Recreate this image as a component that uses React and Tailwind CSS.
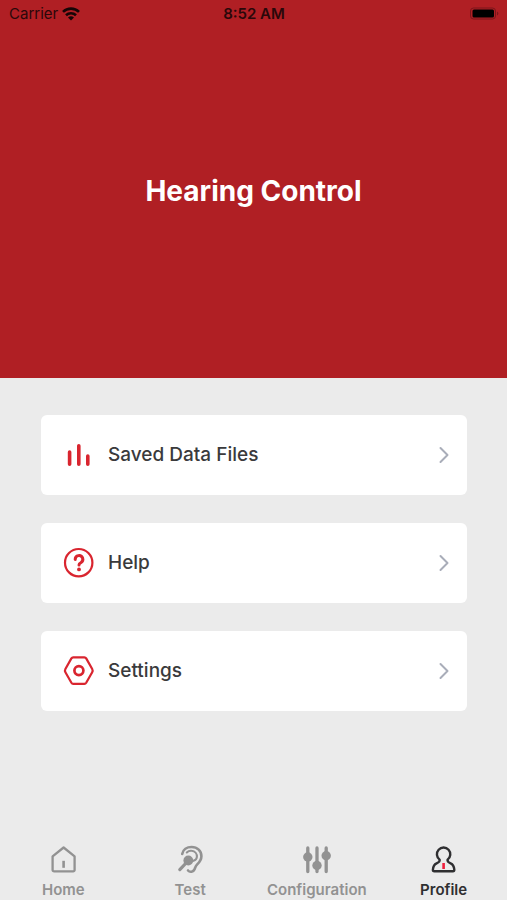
import React, { useState } from "react";
import clsx from "clsx";

const ChartIcon = () => (
  <svg viewBox="0 0 32 32" className="size-8" fill="none" stroke="#d9252f" strokeWidth="3.6" strokeLinecap="round">
    <path d="M6.600 13v12.200M15.800 6.800v18.400M24.800 17v8.200" />
  </svg>
);

const HelpIcon = () => (
  <svg viewBox="0 0 32 32" className="size-8" fill="none" stroke="#d9252f" strokeLinecap="round">
    <circle cx="15.700" cy="15.700" r="13.700" strokeWidth="2.200" />
    <path d="M12.200 12.400a3.800 3.800 0 1 1 5.600 3.300c-1.300.7-1.800 1.200-1.800 2.300" strokeWidth="3" />
    <circle cx="16" cy="22.400" r="1.900" fill="#d9252f" stroke="none" />
  </svg>
);

const SettingsIcon = () => (
  <svg viewBox="0 0 32 32" className="size-8" fill="none" stroke="#d9252f" strokeWidth="2.200" strokeLinejoin="round">
    <path d="M10.200 2.400h11.200q1.200 0 1.800 1l6 10.600q.9 1.600 0 3.200l-6 10.600q-.6 1-1.800 1H10.200q-1.200 0-1.800-1l-6-10.600q-.9-1.600 0-3.200l6-10.600q.6-1 1.800-1z" />
    <circle cx="15.900" cy="15.600" r="4.500" strokeWidth="2.700" />
  </svg>
);

const HomeIcon = () => (
  <svg viewBox="0 0 30 30" className="size-[30px]" fill="none" stroke="currentColor" strokeWidth="2.300" strokeLinejoin="round" strokeLinecap="round">
    <path d="M4.600 11.300 15.600 2.500l11 8.800v13.600a1.500 1.500 0 0 1-1.500 1.500H6.100a1.500 1.500 0 0 1-1.500-1.500z" />
    <path d="M15.600 15.800v7" strokeWidth="2.600" strokeLinecap="butt" />
  </svg>
);

const EarIcon = () => (
  <svg viewBox="0 0 30 30" className="size-[30px]" fill="none" stroke="currentColor" strokeLinecap="round">
    <path d="M7.200 9C8 4.600 11.900 2 16.600 2c5.800 0 9.800 3.900 9.800 9.200 0 3.900-2 6-4.200 8.200-1.700 1.700-1.900 3.200-2.700 5-1.100 2.500-4.600 3.300-6.500 1.100" strokeWidth="2.600" />
    <path d="M11.800 7.500c1.300-1.300 3-1.900 4.800-1.700 3.500.3 5.500 3 5.300 6.200-.2 2.200-1.500 3.200-3.400 3.800" strokeWidth="2.100" />
    <circle cx="13.300" cy="15.500" r="4.900" fill="currentColor" stroke="none" />
    <path d="M13 16 4.800 24.600" strokeWidth="3.200" />
  </svg>
);

const SlidersIcon = () => (
  <svg viewBox="0 0 30 30" className="size-[30px]" fill="currentColor" stroke="currentColor" strokeWidth="3.300" strokeLinecap="round">
    <path d="M5.800 3v23.500M15 3v23.500M24.200 3v23.500" />
    <g stroke="none">
      <circle cx="5.800" cy="12" r="4.700" />
      <circle cx="15" cy="20.500" r="4.700" />
      <circle cx="24.200" cy="10.800" r="4.700" />
    </g>
  </svg>
);

const ProfileIcon = () => (
  <svg viewBox="0 0 30 30" className="size-[30px]" fill="none" stroke="currentColor" strokeWidth="2.400" strokeLinejoin="round">
    <path d="M10.600 14.600A6.700 6.700 0 1 1 18.600 14.600C18.100 16.600 19.400 17.400 21.600 18.300c2.900 1.200 3.500 3.400 3.700 6.400q.1 1.600-1.400 1.600H5.300q-1.500 0-1.400-1.600c.2-3 .8-5.200 3.700-6.400 2.200-.9 3.500-1.700 3-3.700z" />
    <path d="M14.600 18v6" stroke="#f01f3d" strokeWidth="2.600" />
  </svg>
);

const menuItems = [
  { label: "Saved Data Files", Icon: ChartIcon },
  { label: "Help", Icon: HelpIcon },
  { label: "Settings", Icon: SettingsIcon },
];

const tabs = [
  { label: "Home", Icon: HomeIcon },
  { label: "Test", Icon: EarIcon },
  { label: "Configuration", Icon: SlidersIcon },
  { label: "Profile", Icon: ProfileIcon },
];

function StatusBar() {
  return (
    <div className="grid grid-cols-3 items-center h-7 pl-[9px] pr-2 text-[15px] leading-5 text-[#2a080a]">
      <div className="flex items-center gap-1">
        <span>Carrier</span>
        {/* wifi */}
        <svg viewBox="0 0 18 14" className="w-[18px] h-[14px]" fill="none" stroke="#160506" strokeWidth="2.600">
          <path d="M1 4.900a11.500 11.500 0 0 1 16 0M4 8.300a7.200 7.200 0 0 1 10 0" />
          <path d="M9 13.600 6 10.600a4.300 4.300 0 0 1 6 0z" fill="#160506" stroke="none" />
        </svg>
      </div>
      <span className="text-center font-semibold">8:52 AM</span>
      {/* battery */}
      <svg viewBox="0 0 30 14" className="w-[30px] h-[14px] justify-self-end">
        <rect x="1.500" y="1" width="25" height="11" rx="3" fill="none" stroke="#7a161b" />
        <rect x="3.500" y="2.500" width="21.500" height="8" rx="1.500" fill="#000" />
        <path d="M28 4.500v4q1.300-.6 1.300-2t-1.300-2z" fill="#7a161b" />
      </svg>
    </div>
  );
}

function App() {
  const [active, setActive] = useState("Profile");

  return (
    <div className="flex flex-col min-h-screen bg-[#ebebeb] font-['Inter','Liberation_Sans',sans-serif]">
      <header className="bg-[#b01f24] text-white">
        <StatusBar />
        <h1 className="pt-[145px] pb-[169px] text-center text-[28px] leading-9 font-bold">Hearing Control</h1>
      </header>

      <main className="flex flex-col gap-7 pl-[41px] pr-10 pt-[37px] pb-8">
        {menuItems.map(({ label, Icon }) => (
          <button
            key={label}
            className="flex items-center w-full h-20 pl-[22px] pr-4 rounded-md bg-white text-left cursor-pointer"
          >
            <Icon />
            <span className="ml-[13px] flex-1 text-[19px] leading-6 font-medium text-[#3a3a3c]">{label}</span>
            <svg viewBox="0 0 14 18" className="w-[14px] h-[18px]" fill="none" stroke="#a9adb9" strokeWidth="2" strokeLinecap="round" strokeLinejoin="round">
              <path d="M3.500 2 10.500 9l-7 7" />
            </svg>
          </button>
        ))}
      </main>

      <nav className="mt-auto grid grid-cols-4">
        {tabs.map(({ label, Icon }) => (
          <button
            key={label}
            onClick={() => setActive(label)}
            className={clsx(
              "flex flex-col items-center gap-[5px] text-[15px] leading-5 font-semibold cursor-pointer",
              active === label ? "text-[#2f2f31]" : "text-[#929292]"
            )}
          >
            <Icon />
            <span>{label}</span>
          </button>
        ))}
      </nav>
    </div>
  );
}

export default App;
